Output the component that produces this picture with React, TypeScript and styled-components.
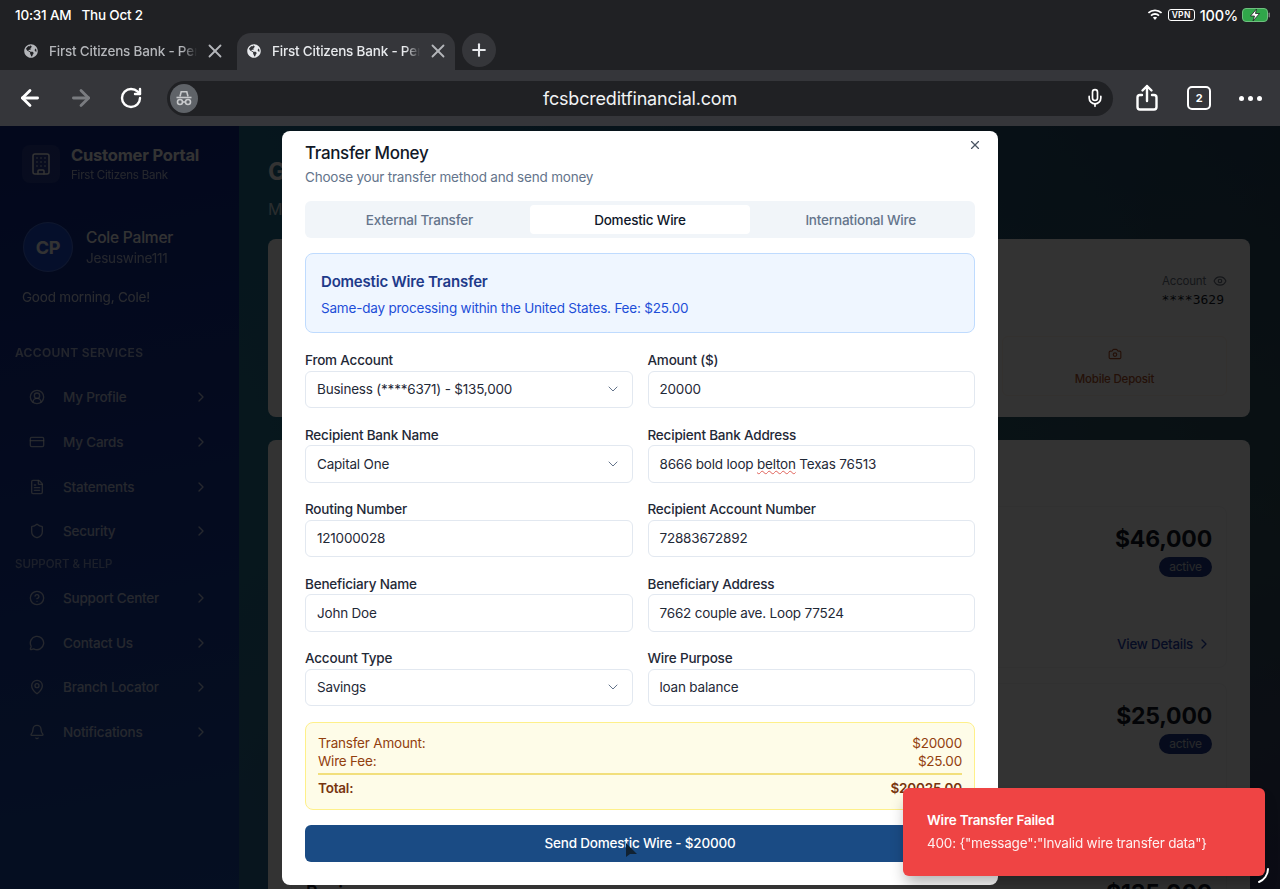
import React from "react";
import styled, { createGlobalStyle } from "styled-components";
import {
  ArrowLeft,
  ArrowRight,
  Bell,
  Building,
  Camera,
  ChevronDown,
  ChevronRight,
  CircleHelp,
  CircleUserRound,
  CreditCard,
  Eye,
  FileText,
  MapPin,
  MessageCircle,
  Mic,
  Plus,
  RotateCw,
  Shield,
  X,
} from "lucide-react";
import { FaGlobeAmericas } from "react-icons/fa";

const GlobalStyle = createGlobalStyle`
  html, body { margin: 0; padding: 0; background: #202124; }
  * { box-sizing: border-box; }
  body { font-family: Inter, "Noto Sans", "Liberation Sans", sans-serif; letter-spacing: -0.2px; }
`;

const Screen = styled.div`
  position: relative;
  width: 1280px;
  height: 889px;
  overflow: hidden;
  display: flex;
  flex-direction: column;
`;

/* browser chrome */
const StatusBar = styled.div`
  height: 33px;
  flex: none;
  background: #202124;
  color: #fff;
  display: flex;
  align-items: center;
  justify-content: space-between;
  padding: 0 9px 3px 15px;
  font-size: 13.5px;
  font-weight: 500;
`;

const StatusLeft = styled.div`
  display: flex;
  gap: 10px;
`;

const StatusRight = styled.div`
  display: flex;
  align-items: center;
  gap: 4px;
  font-size: 14.5px;
`;

const VpnBadge = styled.span`
  border: 1px solid #fff;
  border-radius: 3px;
  font-size: 8.5px;
  font-weight: 600;
  line-height: 10px;
  padding: 0 3px;
  letter-spacing: 0.3px;
  margin: 0 1px;
`;

const TabStrip = styled.div`
  height: 37px;
  flex: none;
  background: #202124;
  display: flex;
  align-items: stretch;
  padding-left: 14px;
`;

const Tab = styled.div<{ $active?: boolean }>`
  width: 218px;
  margin-right: ${(p) => (p.$active ? "7px" : "5px")};
  display: flex;
  align-items: center;
  padding: 0 6px 2px 10px;
  gap: 11px;
  border-radius: 14px 14px 0 0;
  background: ${(p) => (p.$active ? "#35363a" : "transparent")};
  color: ${(p) => (p.$active ? "#e8eaed" : "#b4b6ba")};
  svg { flex: none; }
`;

const TabTitle = styled.span`
  flex: 1;
  overflow: hidden;
  white-space: nowrap;
  font-size: 13.5px;
  font-weight: 500;
  -webkit-mask-image: linear-gradient(90deg, #000 90%, transparent 100%);
  mask-image: linear-gradient(90deg, #000 90%, transparent 100%);
`;

const TabClose = styled.span`
  display: flex;
  margin-left: -4px;
  color: #b4b6ba;
`;

const NewTab = styled.div`
  width: 34px;
  height: 34px;
  border-radius: 50%;
  background: #35363a;
  color: #e8eaed;
  display: flex;
  align-items: center;
  justify-content: center;
`;

const Toolbar = styled.div`
  height: 56px;
  flex: none;
  background: #35363a;
  display: flex;
  align-items: center;
  padding: 0 18px 0 17px;
  color: #fff;
`;

const NavButtons = styled.div`
  display: flex;
  align-items: center;
  gap: 25px;
  width: 150px;
  flex: none;
`;

const UrlPill = styled.div`
  flex: 1;
  height: 35px;
  border-radius: 18px;
  background: #202124;
  display: flex;
  align-items: center;
  justify-content: space-between;
  padding: 0 8px 0 3px;
  position: relative;
`;

const UrlText = styled.span`
  position: absolute;
  left: 0;
  right: 0;
  text-align: center;
  font-size: 18px;
  font-weight: 400;
  color: #f1f3f4;
`;

const Incognito = styled.div`
  width: 28px;
  height: 29px;
  border-radius: 50%;
  background: #5f6368;
  display: flex;
  align-items: center;
  justify-content: center;
`;

const ToolActions = styled.div`
  width: 149px;
  flex: none;
  display: flex;
  align-items: center;
  justify-content: space-between;
  padding-left: 22px;
`;

const TabCount = styled.div`
  width: 24px;
  height: 24px;
  border: 2px solid #fff;
  border-radius: 5px;
  font-size: 11px;
  font-weight: 700;
  display: flex;
  align-items: center;
  justify-content: center;
`;

const Dots = styled.div`
  display: flex;
  gap: 4px;
`;

const Dot = styled.span`
  width: 5px;
  height: 5px;
  border-radius: 50%;
  background: #fff;
`;

/* page behind the dialog */
const Page = styled.div`
  flex: 1;
  position: relative;
  display: flex;
  min-height: 0;
  background:
    linear-gradient(90deg, rgba(30, 120, 160, 0.75) 239px, rgba(40, 60, 90, 0.5) 100%),
    linear-gradient(180deg, #24506a 0%, #3c6a60 50%, #503c78 100%);
`;

const Sidebar = styled.aside`
  width: 239px;
  flex: none;
  background: linear-gradient(170deg, #10288c 0%, #16389c 50%, #1c4aa8 100%);
  color: #fff;
  padding: 18px 0 0;
`;

const Brand = styled.div`
  display: flex;
  align-items: center;
  gap: 11px;
  padding-left: 22px;
`;

const BrandIcon = styled.div`
  width: 38px;
  height: 38px;
  border-radius: 8px;
  background: rgba(255, 255, 255, 0.1);
  display: flex;
  align-items: center;
  justify-content: center;
`;

const BrandName = styled.div`
  font-size: 16.5px;
  font-weight: 700;
  line-height: 22px;
`;

const BrandSub = styled.div`
  font-size: 11.5px;
  line-height: 18px;
  opacity: 0.7;
`;

const Profile = styled.div`
  display: flex;
  align-items: center;
  gap: 13px;
  padding: 38px 0 0 23px;
`;

const Avatar = styled.div`
  width: 50px;
  height: 50px;
  border-radius: 50%;
  background: #1d4ed8;
  box-shadow: inset 0 0 0 1px rgba(255, 255, 255, 0.2);
  font-size: 18px;
  font-weight: 700;
  display: flex;
  align-items: center;
  justify-content: center;
`;

const ProfileName = styled.div`
  font-size: 15.5px;
  font-weight: 500;
  line-height: 20px;
  margin-top: 2px;
`;

const ProfileTag = styled.div`
  font-size: 13.5px;
  line-height: 20px;
  opacity: 0.7;
`;

const Greeting = styled.div`
  font-size: 13.5px;
  line-height: 20px;
  padding: 15px 0 0 22px;
  opacity: 0.8;
`;

const SectionLabel = styled.div<{ $top: number; $light?: boolean }>`
  font-size: ${(p) => (p.$light ? "11.5px" : "12px")};
  font-weight: ${(p) => (p.$light ? 500 : 600)};
  line-height: 16px;
  letter-spacing: ${(p) => (p.$light ? "0" : "0.35px")};
  text-transform: uppercase;
  padding: ${(p) => p.$top}px 0 0 15px;
  opacity: ${(p) => (p.$light ? 0.5 : 0.65)};
`;

const NavList = styled.div<{ $top: number }>`
  padding: ${(p) => p.$top}px 30px 0 30px;
`;

const NavItem = styled.div`
  height: 44.7px;
  display: flex;
  align-items: center;
  gap: 18px;
  font-size: 13.5px;
  font-weight: 500;
  color: rgba(255, 255, 255, 0.72);
  svg:first-child { margin-left: -1px; }
  span { flex: 1; }
`;

const Main = styled.main`
  flex: 1;
  min-width: 0;
  padding: 30px 30px 0 29px;
`;

const Heading = styled.h1`
  margin: 0;
  font-size: 24px;
  font-weight: 700;
  line-height: 32px;
  color: #fff;
`;

const SubHeading = styled.p`
  margin: 0 0 18px;
  padding-top: 9px;
  font-size: 16px;
  line-height: 24px;
  color: rgba(255, 255, 255, 0.8);
`;

const Card = styled.section<{ $height?: number }>`
  background: #fff;
  border-radius: 8px;
  padding: 0 23px;
  margin-bottom: 23px;
  ${(p) => (p.$height ? `height: ${p.$height}px;` : "")}
`;

const AccountInfo = styled.div`
  display: flex;
  flex-direction: column;
  align-items: flex-end;
  padding-top: 33px;
  height: 97px;
`;

const AccountLabel = styled.div`
  display: flex;
  align-items: center;
  gap: 7px;
  font-size: 11.5px;
  color: #6b7280;
  line-height: 18px;
`;

const AccountNumber = styled.div`
  font-family: "DejaVu Sans Mono", "Liberation Mono", monospace;
  font-size: 13px;
  line-height: 20px;
  letter-spacing: 0;
  color: #111827;
  margin-right: 3px;
`;

const ActionGrid = styled.div`
  display: grid;
  grid-template-columns: repeat(4, 1fr);
  gap: 12px;
`;

const ActionTile = styled.div`
  grid-column: 4;
  height: 60px;
  border: 1px solid #fef2e8;
  border-radius: 6px;
  display: flex;
  flex-direction: column;
  align-items: center;
  justify-content: center;
  gap: 11px;
  font-size: 11.5px;
  font-weight: 500;
  color: #b4532a;
`;

const AccountList = styled.div`
  display: flex;
  flex-direction: column;
  gap: 15px;
  padding-top: 66px;
`;

const AccountRow = styled.div`
  height: 162px;
  flex: none;
  border: 1px solid #f3f4f6;
  border-radius: 8px;
  padding: 16px 14px 13px;
  display: flex;
  flex-direction: column;
  justify-content: space-between;
`;

const RowTop = styled.div`
  display: flex;
  justify-content: space-between;
`;

const RowName = styled.div`
  font-size: 18px;
  font-weight: 600;
  line-height: 32px;
  color: #111827;
`;

const RowRight = styled.div`
  display: flex;
  flex-direction: column;
  align-items: flex-end;
  gap: 2px;
`;

const Balance = styled.div`
  font-size: 23px;
  font-weight: 700;
  line-height: 32px;
  color: #111827;
`;

const StatusPill = styled.span`
  height: 20px;
  width: 53px;
  text-align: center;
  border-radius: 10px;
  background: #1e3a8a;
  color: #c8ccd4;
  font-size: 12px;
  line-height: 20px;
`;

const ViewDetails = styled.div`
  align-self: flex-end;
  display: flex;
  align-items: center;
  gap: 3px;
  font-size: 13.3px;
  font-weight: 500;
  line-height: 20px;
  color: #1e40af;
`;

/* dialog */
const Overlay = styled.div`
  position: absolute;
  inset: 0;
  background: rgba(0, 0, 0, 0.8);
  display: flex;
  align-items: center;
  justify-content: center;
`;

const Dialog = styled.div`
  position: relative;
  width: 716px;
  height: 754px;
  background: #fff;
  border-radius: 8px;
  padding: 10px 23px 23px;
  display: flex;
  flex-direction: column;
  color: #111827;
`;

const CloseButton = styled.div`
  position: absolute;
  top: 7px;
  right: 16px;
  color: #4b5563;
  display: flex;
`;

const DialogTitle = styled.div`
  font-size: 17px;
  font-weight: 500;
  line-height: 24px;
  letter-spacing: -0.35px;
`;

const DialogSub = styled.div`
  font-size: 13.5px;
  line-height: 20px;
  margin-top: 2px;
  color: #64748b;
`;

const TabList = styled.div`
  height: 37px;
  margin-top: 14px;
  flex: none;
  background: #f1f5f9;
  border-radius: 6px;
  padding: 4px;
  display: grid;
  grid-template-columns: repeat(3, 1fr);
`;

const TabButton = styled.div<{ $active?: boolean }>`
  display: flex;
  align-items: center;
  justify-content: center;
  padding-top: 1px;
  font-size: 13.5px;
  font-weight: 500;
  border-radius: 4px;
  color: ${(p) => (p.$active ? "#0f172a" : "#64748b")};
  background: ${(p) => (p.$active ? "#fff" : "transparent")};
`;

const InfoBox = styled.div`
  height: 80px;
  flex: none;
  margin-top: 15px;
  border: 1px solid #bfdbfe;
  border-radius: 8px;
  background: #eff6ff;
  padding: 16px 15px 0;
`;

const InfoTitle = styled.div`
  font-size: 15px;
  font-weight: 600;
  line-height: 24px;
  color: #1e3a8a;
`;

const InfoText = styled.div`
  font-size: 13.5px;
  line-height: 20px;
  margin-top: 4px;
  color: #1d4ed8;
`;

const FormGrid = styled.div`
  display: grid;
  grid-template-columns: 1fr 1fr;
  column-gap: 15px;
  row-gap: 16.5px;
  margin-top: 17.5px;
`;

const Field = styled.div`
  display: flex;
  flex-direction: column;
`;

const Label = styled.div`
  font-size: 13.5px;
  font-weight: 500;
  line-height: 20.5px;
  color: #1f2937;
`;

const Control = styled.div`
  height: 37.5px;
  border: 1px solid #e2e8f0;
  border-radius: 6px;
  background: #fff;
  padding: 0 11px;
  display: flex;
  align-items: center;
  justify-content: space-between;
  font-size: 13.5px;
  color: #1f2937;
  white-space: pre;
  svg { color: #64748b; }
`;

const Misspelled = styled.span`
  text-decoration: underline wavy #e0625a 1px;
`;

const Summary = styled.div`
  height: 88px;
  flex: none;
  margin-top: 15.5px;
  border: 1px solid #fef08a;
  border-radius: 8px;
  background: #fefce8;
  padding: 11px 12px;
  font-size: 13.5px;
  line-height: 18px;
`;

const SummaryRow = styled.div<{ $total?: boolean }>`
  display: flex;
  justify-content: space-between;
  font-weight: ${(p) => (p.$total ? 600 : 400)};
  color: ${(p) => (p.$total ? "#78350f" : "#92400e")};
`;

const SummaryRule = styled.div`
  height: 2px;
  background: #f2df7c;
  margin: 3px 0 4px;
`;

const SendButton = styled.div`
  height: 37px;
  flex: none;
  margin-top: 15px;
  border-radius: 6px;
  background: #1a4b84;
  color: #fff;
  font-size: 13.5px;
  font-weight: 500;
  display: flex;
  align-items: center;
  justify-content: center;
`;

const Toast = styled.div`
  position: absolute;
  right: 15px;
  bottom: 13px;
  width: 362px;
  height: 88px;
  background: #ef4444;
  border-radius: 6px;
  padding: 22px 24px;
  color: #fff;
  box-shadow: 0 10px 15px -3px rgba(0, 0, 0, 0.3);
`;

const ToastTitle = styled.div`
  font-size: 13.5px;
  font-weight: 600;
  line-height: 20px;
`;

const ToastBody = styled.div`
  font-size: 13.5px;
  line-height: 20px;
  margin-top: 3px;
  opacity: 0.92;
`;

const Pointer = styled.svg`
  position: absolute;
  left: 624px;
  top: 842px;
`;

const CornerArc = styled.svg`
  position: absolute;
  right: 0;
  bottom: 0;
`;

const WifiIcon = () => (
  <svg width="16" height="13" viewBox="0 0 16 13" fill="#fff">
    <path d="M8 2.2c2.3 0 4.4.9 6 2.4l1.2-1.3A10.4 10.4 0 0 0 8 .4 10.4 10.4 0 0 0 .8 3.3L2 4.6a8.7 8.7 0 0 1 6-2.4z" />
    <path d="M8 5.9c1.3 0 2.5.5 3.4 1.3l1.2-1.3A6.8 6.8 0 0 0 8 4.1a6.8 6.8 0 0 0-4.6 1.8l1.2 1.3C5.5 6.4 6.7 5.9 8 5.9z" />
    <path d="M8 7.8c-.8 0-1.5.3-2.1.8L8 11l2.1-2.4c-.6-.5-1.3-.8-2.1-.8z" />
  </svg>
);

const BatteryIcon = () => (
  <svg width="29" height="14" viewBox="0 0 29 14">
    <rect x="0.5" y="0.5" width="25" height="13" rx="3.5" fill="#30a64a" stroke="#6fbf7f" />
    <rect x="26.5" y="4.5" width="1.5" height="5" rx="0.7" fill="#777" />
    <path d="M14.5 1 8.500 8h4l-1.500 5 6.500-7.500h-4z" fill="#fff" stroke="#202124" strokeWidth="0.8" />
  </svg>
);

const ShareIcon = () => (
  <svg width="24" height="28" viewBox="0 0 24 28" fill="none" stroke="#fff" strokeWidth="2.4" strokeLinecap="round" strokeLinejoin="round">
    <path d="M7 11H5a2.5 2.5 0 0 0-2.500 2.500v9.500A2.500 2.500 0 0 0 5 25.500h14a2.500 2.500 0 0 0 2.500-2.500v-9.500A2.500 2.500 0 0 0 19 11h-2" />
    <path d="M12 17V2M7.500 6.500 12 2l4.500 4.500" />
  </svg>
);

const IncognitoIcon = () => (
  <svg width="18" height="18" viewBox="0 0 18 18" fill="none" stroke="#c8cacc" strokeWidth="1.600">
    <path d="M5 7.500 6.200 2.800h5.600L13 7.500" />
    <path d="M1.500 8.500h15" />
    <circle cx="5" cy="13" r="2.500" />
    <circle cx="13" cy="13" r="2.500" />
    <path d="M7.500 13h3" />
  </svg>
);

const accounts = [
  { name: "Checking", balance: "$46,000" },
  { name: "Savings", balance: "$25,000" },
  { name: "Business", balance: "$135,000" },
];

const serviceItems = [
  { label: "My Profile", Icon: CircleUserRound },
  { label: "My Cards", Icon: CreditCard },
  { label: "Statements", Icon: FileText },
  { label: "Security", Icon: Shield },
];

const supportItems = [
  { label: "Support Center", Icon: CircleHelp },
  { label: "Contact Us", Icon: MessageCircle },
  { label: "Branch Locator", Icon: MapPin },
  { label: "Notifications", Icon: Bell },
];

type FieldDef = { label: string; value: React.ReactNode; select?: boolean };

const fields: FieldDef[] = [
  { label: "From Account", value: "Business (****6371) - $135,000", select: true },
  { label: "Amount ($)", value: "20000" },
  { label: "Recipient Bank Name", value: "Capital One", select: true },
  {
    label: "Recipient Bank Address",
    value: (
      <span>
        8666 bold loop <Misspelled>belton</Misspelled> Texas 76513
      </span>
    ),
  },
  { label: "Routing Number", value: "121000028" },
  { label: "Recipient Account Number", value: "72883672892" },
  { label: "Beneficiary Name", value: "John Doe" },
  { label: "Beneficiary Address", value: "7662 couple ave. Loop 77524" },
  { label: "Account Type", value: "Savings", select: true },
  { label: "Wire Purpose", value: "loan balance" },
];

const App: React.FC = () => {
  return (
    <Screen>
      <GlobalStyle />
      <StatusBar>
        <StatusLeft>
          <span>10:31 AM</span>
          <span>Thu Oct 2</span>
        </StatusLeft>
        <StatusRight>
          <WifiIcon />
          <VpnBadge>VPN</VpnBadge>
          <span>100%</span>
          <BatteryIcon />
        </StatusRight>
      </StatusBar>

      <TabStrip>
        <Tab>
          <FaGlobeAmericas size={14} />
          <TabTitle>First Citizens Bank - Personal</TabTitle>
          <TabClose>
            <X size={22} strokeWidth={2} />
          </TabClose>
        </Tab>
        <Tab $active>
          <FaGlobeAmericas size={14} />
          <TabTitle>First Citizens Bank - Personal</TabTitle>
          <TabClose>
            <X size={22} strokeWidth={2} />
          </TabClose>
        </Tab>
        <NewTab>
          <Plus size={20} strokeWidth={2.5} />
        </NewTab>
      </TabStrip>

      <Toolbar>
        <NavButtons>
          <ArrowLeft size={26} strokeWidth={2.6} />
          <ArrowRight size={26} strokeWidth={2.6} color="#7a7c80" />
          <RotateCw size={24} strokeWidth={2.4} />
        </NavButtons>
        <UrlPill>
          <Incognito>
            <IncognitoIcon />
          </Incognito>
          <UrlText>fcsbcreditfinancial.com</UrlText>
          <Mic size={20} strokeWidth={2} />
        </UrlPill>
        <ToolActions>
          <ShareIcon />
          <TabCount>2</TabCount>
          <Dots>
            <Dot />
            <Dot />
            <Dot />
          </Dots>
        </ToolActions>
      </Toolbar>

      <Page>
        <Sidebar>
          <Brand>
            <BrandIcon>
              <Building size={24} strokeWidth={1.5} />
            </BrandIcon>
            <div>
              <BrandName>Customer Portal</BrandName>
              <BrandSub>First Citizens Bank</BrandSub>
            </div>
          </Brand>
          <Profile>
            <Avatar>CP</Avatar>
            <div>
              <ProfileName>Cole Palmer</ProfileName>
              <ProfileTag>Jesuswine111</ProfileTag>
            </div>
          </Profile>
          <Greeting>Good morning, Cole!</Greeting>
          <SectionLabel $top={38}>Account Services</SectionLabel>
          <NavList $top={14}>
            {serviceItems.map(({ label, Icon }) => (
              <NavItem key={label}>
                <Icon size={16} />
                <span>{label}</span>
                <ChevronRight size={16} />
              </NavItem>
            ))}
          </NavList>
          <SectionLabel $top={2} $light>
            Support &amp; Help
          </SectionLabel>
          <NavList $top={4}>
            {supportItems.map(({ label, Icon }) => (
              <NavItem key={label}>
                <Icon size={16} />
                <span>{label}</span>
                <ChevronRight size={16} />
              </NavItem>
            ))}
          </NavList>
        </Sidebar>

        <Main>
          <Heading>Good morning</Heading>
          <SubHeading>Manage your accounts</SubHeading>
          <Card $height={178}>
            <AccountInfo>
              <AccountLabel>
                Account
                <Eye size={14} />
              </AccountLabel>
              <AccountNumber>****3629</AccountNumber>
            </AccountInfo>
            <ActionGrid>
              <ActionTile>
                <Camera size={14} />
                Mobile Deposit
              </ActionTile>
            </ActionGrid>
          </Card>
          <Card>
            <AccountList>
              {accounts.map((account) => (
                <AccountRow key={account.name}>
                  <RowTop>
                    <RowName>{account.name}</RowName>
                    <RowRight>
                      <Balance>{account.balance}</Balance>
                      <StatusPill>active</StatusPill>
                    </RowRight>
                  </RowTop>
                  <ViewDetails>
                    View Details
                    <ChevronRight size={16} />
                  </ViewDetails>
                </AccountRow>
              ))}
            </AccountList>
          </Card>
        </Main>

        <Overlay>
          <Dialog>
            <CloseButton>
              <X size={14} />
            </CloseButton>
            <DialogTitle>Transfer Money</DialogTitle>
            <DialogSub>Choose your transfer method and send money</DialogSub>
            <TabList>
              <TabButton>External Transfer</TabButton>
              <TabButton $active>Domestic Wire</TabButton>
              <TabButton>International Wire</TabButton>
            </TabList>
            <InfoBox>
              <InfoTitle>Domestic Wire Transfer</InfoTitle>
              <InfoText>Same-day processing within the United States. Fee: $25.00</InfoText>
            </InfoBox>
            <FormGrid>
              {fields.map((field) => (
                <Field key={field.label}>
                  <Label>{field.label}</Label>
                  <Control>
                    {field.value}
                    {field.select && <ChevronDown size={16} strokeWidth={1.5} />}
                  </Control>
                </Field>
              ))}
            </FormGrid>
            <Summary>
              <SummaryRow>
                <span>Transfer Amount:</span>
                <span>$20000</span>
              </SummaryRow>
              <SummaryRow>
                <span>Wire Fee:</span>
                <span>$25.00</span>
              </SummaryRow>
              <SummaryRule />
              <SummaryRow $total>
                <span>Total:</span>
                <span>$20025.00</span>
              </SummaryRow>
            </Summary>
            <SendButton>Send Domestic Wire - $20000</SendButton>
          </Dialog>
          <Toast>
            <ToastTitle>Wire Transfer Failed</ToastTitle>
            <ToastBody>400: {'{"message":"Invalid wire transfer data"}'}</ToastBody>
          </Toast>
        </Overlay>
      </Page>

      <Pointer width="14" height="18" viewBox="0 0 14 18">
        <path d="M2 1v14l4-3 7 0z" fill="#123" />
      </Pointer>
      <CornerArc width="30" height="26" viewBox="0 0 30 26" fill="none">
        <path d="M18 6c0 6-4 11-9 13" stroke="#fff" strokeWidth="2" strokeLinecap="round" />
      </CornerArc>
    </Screen>
  );
};

export default App;
